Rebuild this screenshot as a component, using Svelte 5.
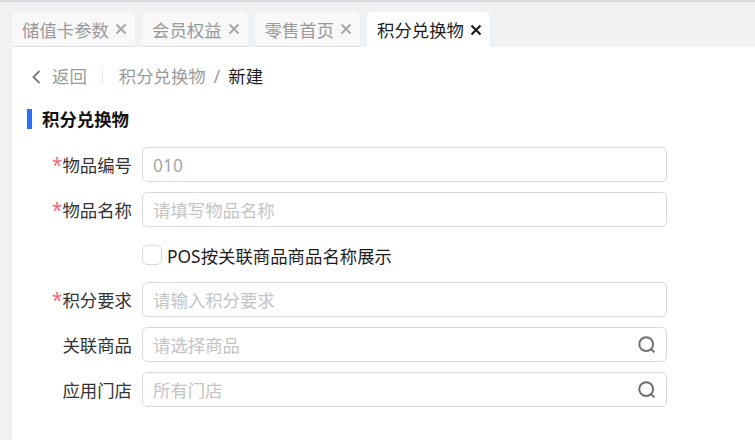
<script>
  const tabs = [
    { name: "储值卡参数", width: 123 },
    { name: "会员权益", width: 105.5 },
    { name: "零售首页", width: 105.5 },
    { name: "积分兑换物", width: 123, active: true },
  ];

  const fields = [
    { label: "物品编号", required: true, value: "010", disabled: true },
    { label: "物品名称", required: true, placeholder: "请填写物品名称" },
    { checkbox: "POS按关联商品商品名称展示" },
    { label: "积分要求", required: true, placeholder: "请输入积分要求" },
    { label: "关联商品", placeholder: "请选择商品", search: true },
    { label: "应用门店", placeholder: "所有门店", search: true },
  ];
</script>

<div class="page">
  <div class="tabs">
    {#each tabs as tab}
      <div class="tab" class:active={tab.active} style="width: {tab.width}px">
        <span>{tab.name}</span>
        <svg class="close" width="12" height="12" viewBox="0 0 12 12">
          <path d="M1.5 1.5 L10.5 10.5 M10.5 1.5 L1.5 10.5" />
        </svg>
      </div>
    {/each}
  </div>

  <div class="content">
    <div class="crumbs">
      <svg class="back" width="10" height="14" viewBox="0 0 10 14">
        <path d="M9.5 1 L3.5 7 L9.5 13" />
      </svg>
      <span class="muted">返回</span>
      <i class="divider"></i>
      <span class="muted">积分兑换物</span>
      <span class="slash">/</span>
      <span>新建</span>
    </div>

    <h2 class="title">积分兑换物</h2>

    <form class="form">
      {#each fields as field}
        {#if field.checkbox}
          <label class="check-row">
            <span class="box"></span>
            <span>{field.checkbox}</span>
          </label>
        {:else}
          <div class="row">
            <div class="label">
              {#if field.required}<em>*</em>{/if}{field.label}
            </div>
            <div class="input" class:readonly={field.disabled}>
              <input value={field.value ?? ""} placeholder={field.placeholder} readonly={field.disabled} />
              {#if field.search}
                <svg class="search" width="20" height="20" viewBox="0 0 20 20">
                  <circle cx="9.2" cy="9.2" r="6.9" />
                  <path d="M14.2 14.2 L17.4 17.4" />
                </svg>
              {/if}
            </div>
          </div>
        {/if}
      {/each}
    </form>
  </div>
</div>

<style>
  :global(body) {
    margin: 0;
    background: #f0f1f3;
  }

  .page {
    width: 755px;
    height: 440px;
    box-sizing: border-box;
    overflow: hidden;
    border-top: 2px solid #dcdde0;
    padding: 10px 0 0 12px;
    font-family: "Noto Sans", "Noto Sans CJK SC", sans-serif;
    font-size: 17.4px;
    color: #1d1d1f;
  }

  .tabs {
    display: flex;
    gap: 7px;
    height: 35px;
  }

  .tab {
    display: flex;
    align-items: center;
    gap: 6px;
    box-sizing: border-box;
    padding-left: 10px;
    background: #f8f8f9;
    border-radius: 5px 5px 0 0;
    border-bottom: 1px solid #dfe0e2;
    color: #9a9a9a;
    white-space: nowrap;
  }

  .tab.active {
    background: #fff;
    border-bottom: 0;
    color: #1d1d1f;
  }

  .close {
    stroke: #a8a8a8;
    stroke-width: 2;
    fill: none;
  }

  .tab.active .close {
    stroke: #1d1d1f;
    stroke-width: 2.2;
  }

  .content {
    background: #fff;
    height: 393px;
    padding: 0 0 0 15px;
  }

  .crumbs {
    display: flex;
    align-items: center;
    height: 60px;
    padding: 0 0 2px 3px;
    line-height: 1;
  }

  .back {
    fill: none;
    stroke: #777;
    stroke-width: 1.8;
    margin-right: 12px;
  }

  .muted {
    color: #9a9a9a;
  }

  .divider {
    width: 1px;
    height: 14px;
    background: #e8e8e8;
    margin: 0 16px 0 15px;
  }

  .slash {
    color: #9a9a9a;
    margin: 0 8px;
  }

  .title {
    margin: 0;
    height: 20px;
    line-height: 20px;
    font-size: 17.4px;
    font-weight: 700;
    color: #111;
    border-left: 5px solid #2b6ff2;
    padding-left: 10px;
  }

  .form {
    display: flex;
    flex-direction: column;
    gap: 10px;
    margin-top: 18px;
  }

  .row {
    display: flex;
    align-items: center;
    gap: 10px;
    height: 35px;
  }

  .label {
    width: 105px;
    text-align: right;
    color: #333;
    white-space: nowrap;
  }

  .label em {
    display: inline-block;
    width: 10px;
    height: 0;
    margin-right: 0.5px;
    font-family: "Liberation Sans", sans-serif;
    font-size: 25px;
    line-height: 0;
    vertical-align: -3px;
    color: #f7687a;
    font-style: normal;
  }

  .input {
    display: flex;
    align-items: center;
    width: 525px;
    height: 35px;
    box-sizing: border-box;
    border: 1px solid #d9d9d9;
    border-radius: 5px;
    padding: 0 9px 0 10px;
  }

  .input input {
    flex: 1;
    min-width: 0;
    border: 0;
    outline: 0;
    padding: 0;
    background: none;
    font: inherit;
    color: #a8a8a8;
  }

  .input input::placeholder {
    color: #c4c4c4;
    opacity: 1;
  }

  .search {
    fill: none;
    stroke: #6f6f6f;
    stroke-width: 2;
  }

  .check-row {
    display: flex;
    align-items: center;
    gap: 5px;
    height: 26px;
    margin: 5px 0 4px 115px;
    color: #1d1d1f;
  }

  .box {
    width: 20px;
    height: 20px;
    box-sizing: border-box;
    border: 1px solid #d9d9d9;
    border-radius: 5px;
  }
</style>
